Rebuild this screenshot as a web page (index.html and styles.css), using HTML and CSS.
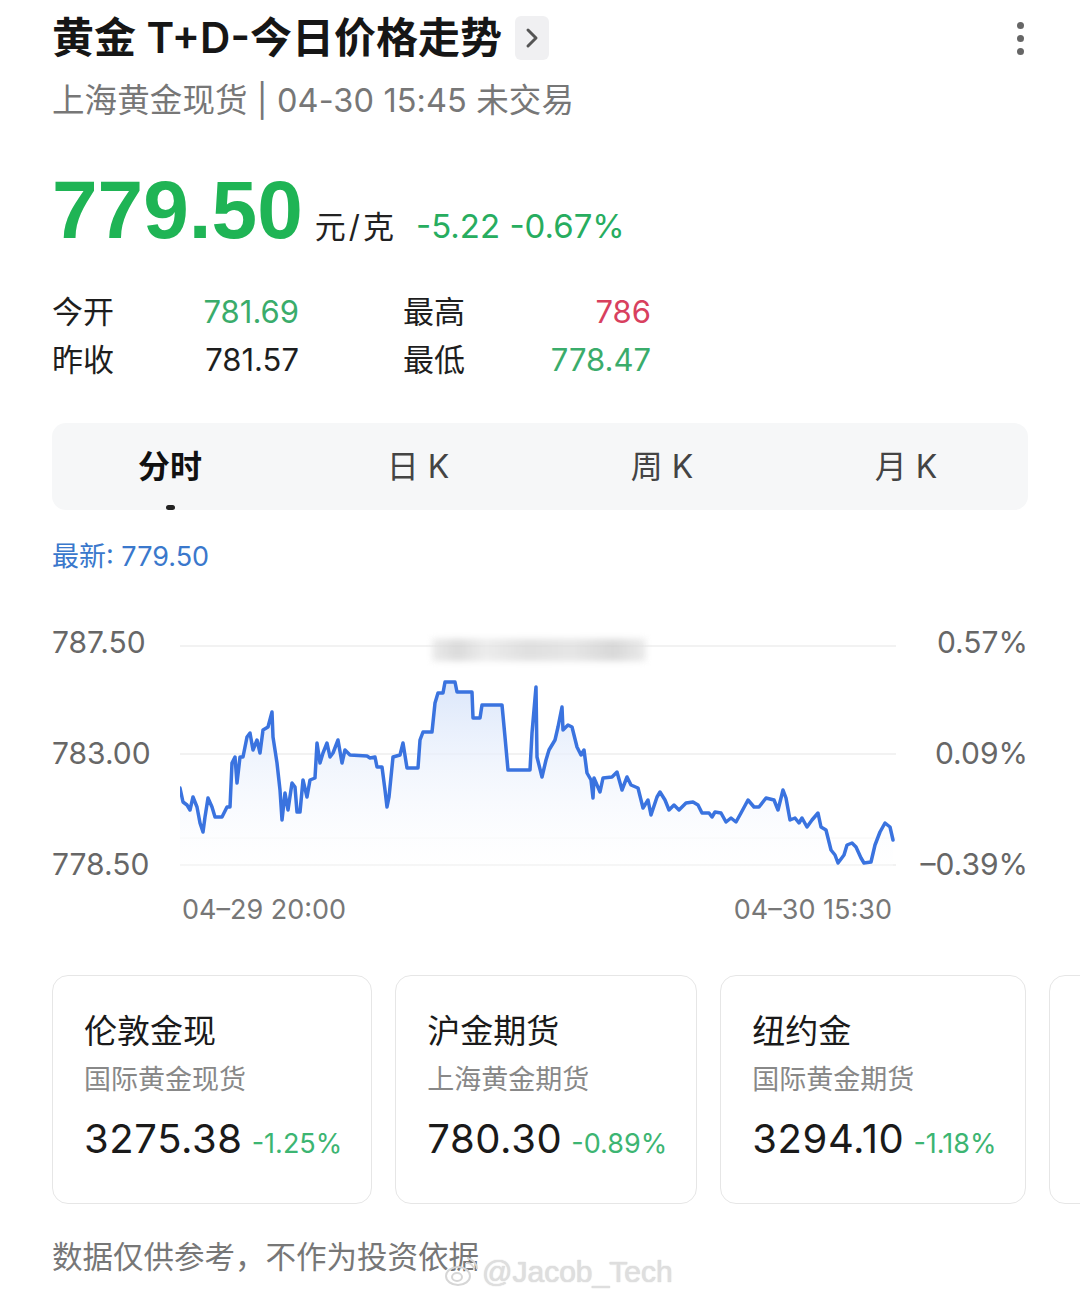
FILE: index.html
```html
<!DOCTYPE html>
<html lang="zh-CN">
<head>
<meta charset="utf-8">
<title>黄金 T+D-今日价格走势</title>
<link rel="stylesheet" href="styles.css">
</head>
<body>
<div class="page">
  <header class="header">
    <div class="title-row">
      <h1 class="title">黄金 T+D-今日价格走势</h1>
      <span class="chev-box">
        <svg width="16" height="22" viewBox="0 0 16 22"><polyline points="4,3 12,11 4,19" fill="none" stroke="#555" stroke-width="3" stroke-linecap="round" stroke-linejoin="round"/></svg>
      </span>
    </div>
    <div class="more"><i></i><i></i><i></i></div>
  </header>
  <div class="subtitle">上海黄金现货 | 04-30 15:45 未交易</div>

  <div class="price-row">
    <span class="price">779.50</span>
    <span class="unit">元/克</span>
    <span class="change">-5.22 -0.67%</span>
  </div>

  <div class="stats">
    <span class="lbl">今开</span><span class="val green">781.69</span>
    <span class="lbl">最高</span><span class="val red">786</span>
    <span class="lbl">昨收</span><span class="val">781.57</span>
    <span class="lbl">最低</span><span class="val green">778.47</span>
  </div>

  <div class="tabs">
    <div class="tab active">分时<span class="ind"></span></div>
    <div class="tab">日 K</div>
    <div class="tab">周 K</div>
    <div class="tab">月 K</div>
  </div>

  <div class="latest">最新: 779.50</div>

  <div class="chart">
    <div class="axis axis-left"><span>787.50</span><span>783.00</span><span>778.50</span></div>
    <svg class="plot" width="716" height="252" viewBox="180 627 716 252">
      <defs>
        <linearGradient id="fillg" x1="0" y1="680" x2="0" y2="870" gradientUnits="userSpaceOnUse">
          <stop offset="0" stop-color="#d9e5fa" stop-opacity="0.95"/>
          <stop offset="1" stop-color="#ffffff" stop-opacity="0.3"/>
        </linearGradient>
      </defs>
      <line x1="180" y1="646" x2="896" y2="646" stroke="#eeeeee" stroke-width="1.5"/>
      <line x1="180" y1="754" x2="896" y2="754" stroke="#eeeeee" stroke-width="1.5"/>
      <line x1="180" y1="838" x2="896" y2="838" stroke="#f6f6f6" stroke-width="1"/>
      <line x1="180" y1="865" x2="896" y2="865" stroke="#eeeeee" stroke-width="1.5"/>
      <path fill="url(#fillg)" stroke="none" d="M180,788 L183,802 L187,805 L190,810 L193,797 L197,807 L200,823 L203,832 L205,817 L208,798 L212,807 L215,817 L222,817 L227,807 L230,807 L232,763 L235,757 L237,783 L240,757 L243,757 L247,737 L250,733 L253,750 L257,740 L260,753 L263,730 L268,727 L272,712 L273,737 L277,763 L280,790 L282,820 L285,793 L288,810 L292,783 L295,787 L297,812 L300,812 L303,780 L307,797 L310,780 L315,778 L317,743 L320,763 L323,753 L327,743 L330,757 L333,753 L338,740 L342,763 L345,750 L350,755 L367,756 L370,758 L375,757 L377,767 L382,767 L385,790 L387,807 L389,797 L393,757 L400,755 L403,743 L407,768 L418,768 L420,740 L423,732 L432,732 L435,703 L438,693 L443,693 L445,682 L455,682 L457,692 L472,692 L473,718 L480,718 L482,705 L502,705 L505,737 L508,770 L530,770 L532,733 L536,687 L537,757 L542,777 L546,760 L549,750 L555,740 L558,727 L562,707 L563,730 L568,725 L572,727 L577,747 L581,755 L584,750 L587,773 L591,780 L593,798 L594,778 L600,792 L603,778 L612,777 L617,772 L622,790 L627,777 L631,785 L638,788 L643,808 L648,800 L651,815 L657,797 L660,792 L665,800 L669,810 L674,805 L679,810 L686,803 L693,802 L698,805 L702,813 L709,813 L712,817 L715,812 L721,813 L726,822 L731,818 L736,822 L741,813 L748,800 L754,807 L759,807 L766,798 L774,800 L778,810 L783,790 L786,798 L790,820 L795,818 L799,823 L802,818 L807,827 L812,820 L818,813 L821,827 L826,830 L831,850 L835,855 L838,863 L844,855 L847,845 L852,843 L856,847 L861,858 L864,863 L871,862 L875,845 L880,832 L885,823 L890,827 L893,840 L893,868 L180,868 Z"/>
      <path fill="none" stroke="#3a73df" stroke-width="3.5" stroke-linejoin="round" stroke-linecap="round" d="M180,788 L183,802 L187,805 L190,810 L193,797 L197,807 L200,823 L203,832 L205,817 L208,798 L212,807 L215,817 L222,817 L227,807 L230,807 L232,763 L235,757 L237,783 L240,757 L243,757 L247,737 L250,733 L253,750 L257,740 L260,753 L263,730 L268,727 L272,712 L273,737 L277,763 L280,790 L282,820 L285,793 L288,810 L292,783 L295,787 L297,812 L300,812 L303,780 L307,797 L310,780 L315,778 L317,743 L320,763 L323,753 L327,743 L330,757 L333,753 L338,740 L342,763 L345,750 L350,755 L367,756 L370,758 L375,757 L377,767 L382,767 L385,790 L387,807 L389,797 L393,757 L400,755 L403,743 L407,768 L418,768 L420,740 L423,732 L432,732 L435,703 L438,693 L443,693 L445,682 L455,682 L457,692 L472,692 L473,718 L480,718 L482,705 L502,705 L505,737 L508,770 L530,770 L532,733 L536,687 L537,757 L542,777 L546,760 L549,750 L555,740 L558,727 L562,707 L563,730 L568,725 L572,727 L577,747 L581,755 L584,750 L587,773 L591,780 L593,798 L594,778 L600,792 L603,778 L612,777 L617,772 L622,790 L627,777 L631,785 L638,788 L643,808 L648,800 L651,815 L657,797 L660,792 L665,800 L669,810 L674,805 L679,810 L686,803 L693,802 L698,805 L702,813 L709,813 L712,817 L715,812 L721,813 L726,822 L731,818 L736,822 L741,813 L748,800 L754,807 L759,807 L766,798 L774,800 L778,810 L783,790 L786,798 L790,820 L795,818 L799,823 L802,818 L807,827 L812,820 L818,813 L821,827 L826,830 L831,850 L835,855 L838,863 L844,855 L847,845 L852,843 L856,847 L861,858 L864,863 L871,862 L875,845 L880,832 L885,823 L890,827 L893,840"/>
    </svg>
    <div class="axis axis-right"><span>0.57%</span><span>0.09%</span><span>–0.39%</span></div>
    <div class="smudge"></div>
  </div>
  <div class="xlabels"><span>04–29 20:00</span><span>04–30 15:30</span></div>

  <div class="cards">
    <div class="card">
      <div class="card-title">伦敦金现</div>
      <div class="card-sub">国际黄金现货</div>
      <div class="card-val"><span class="num">3275.38</span><span class="pct">-1.25%</span></div>
    </div>
    <div class="card">
      <div class="card-title">沪金期货</div>
      <div class="card-sub">上海黄金期货</div>
      <div class="card-val"><span class="num">780.30</span><span class="pct">-0.89%</span></div>
    </div>
    <div class="card">
      <div class="card-title">纽约金</div>
      <div class="card-sub">国际黄金期货</div>
      <div class="card-val"><span class="num">3294.10</span><span class="pct">-1.18%</span></div>
    </div>
    <div class="card card-empty"></div>
  </div>

  <div class="footer">
    <span>数据仅供参考，不作为投资依据</span>
    <div class="wm">
      <svg width="34" height="30" viewBox="0 0 34 30"><g fill="none" stroke="#d6d6d6" stroke-width="2"><ellipse cx="14" cy="19" rx="12" ry="9"/><ellipse cx="13" cy="20" rx="5" ry="4"/><path d="M22 6 a7 7 0 0 1 8 7"/><path d="M23 1 a12 12 0 0 1 10 11"/></g></svg>
      <span>@Jacob_Tech</span>
    </div>
  </div>
</div>
</body>
</html>
```

FILE: styles.css
```css
* { box-sizing: border-box; }
html, body { margin: 0; padding: 0; background: #ffffff; }
body {
  width: 1080px;
  height: 1296px;
  overflow: hidden;
  font-family: "Inter", "Noto Sans CJK SC", sans-serif;
  color: #1a1a1a;
}
.page { padding: 12px 52px 0 52px; }

.header { display: flex; justify-content: space-between; align-items: center; }
.title-row { display: flex; align-items: center; gap: 13px; }
.title {
  margin: 0;
  font-size: 42px;
  line-height: 52px;
  font-weight: 600;
  color: #161616;
}
.chev-box {
  width: 34px; height: 44px;
  border-radius: 6px;
  background: #f0f0f2;
  display: flex; align-items: center; justify-content: center;
}
.more { display: flex; flex-direction: column; gap: 6px; margin-right: 4px; }
.more i { display: block; width: 7px; height: 7px; border-radius: 50%; background: #666; }

.subtitle {
  margin-top: 17px;
  font-size: 32.5px;
  line-height: 40px;
  letter-spacing: 0.1px;
  color: #777;
}

.price-row {
  margin-top: 49px;
  display: flex;
  align-items: baseline;
}
.price {
  font-family: "Liberation Sans", "Noto Sans CJK SC", sans-serif;
  font-weight: 700;
  font-size: 82px;
  line-height: 80px;
  color: #1fb455;
}
.unit { margin-left: 12px; font-size: 31px; letter-spacing: 3px; color: #222; }
.change { margin-left: 19px; font-size: 33px; color: #27ad5f; }

.stats {
  margin-top: 38px;
  display: grid;
  grid-template-columns: 100px 147px 204px 148px;
  font-size: 31px;
  line-height: 48px;
}
.stats .lbl:nth-child(3), .stats .lbl:nth-child(7) { margin-left: 104px; }
.stats .val { text-align: right; color: #1e1e1e; }
.stats .green { color: #3aac6b; }
.stats .red { color: #d8405e; }
.stats .lbl { color: #1e1e1e; }

.tabs {
  margin-top: 39px;
  height: 87px;
  border-radius: 14px;
  background: #f6f7f8;
  display: grid;
  grid-template-columns: repeat(4, 1fr);
  align-items: center;
}
.tab {
  position: relative;
  text-align: center;
  font-size: 32px;
  line-height: 44px;
  color: #444;
}
.tab.active { color: #111; font-weight: 700; padding-right: 8px; }
.ind {
  position: absolute;
  left: 114px; top: 60px;
  width: 9px; height: 5px;
  border-radius: 3px;
  background: #222;
}

.latest {
  margin-top: 29px;
  font-size: 27px;
  line-height: 36px;
  color: #3a78cc;
}

.chart {
  position: relative;
  margin-top: 52px;
  display: flex;
  height: 252px;
}
.axis {
  display: flex;
  flex-direction: column;
  justify-content: space-between;
  height: 252px;
  font-size: 30px;
  line-height: 30px;
  color: #676767;
}
.axis-left { width: 128px; }
.axis-right { flex: 1; text-align: right; }
.plot { display: block; flex: none; }
.smudge {
  position: absolute;
  left: 380px; top: 12px;
  width: 214px; height: 22px;
  background: linear-gradient(90deg, #e6e6e6 0%, #d2d2d2 12%, #e8e8e8 25%, #d8d8d8 45%, #e0e0e0 65%, #cfcfcf 85%, #e6e6e6 100%);
  filter: blur(3px);
  opacity: 0.8;
}

.xlabels {
  margin-top: 14px;
  margin-left: 130px;
  width: 710px;
  display: flex;
  justify-content: space-between;
  font-size: 27px;
  line-height: 34px;
  color: #777;
}

.cards {
  margin-top: 48px;
  margin-right: -52px;
  display: flex;
  gap: 23px;
  overflow: hidden;
}
.card {
  flex: none;
  border: 1px solid #e6e6e6;
  border-radius: 16px;
  padding: 33px 29px 34px 31px;
  background: #fff;
}
.card-empty { width: 300px; }
.card-title { font-size: 33px; line-height: 44px; color: #1a1a1a; }
.card-sub { margin-top: 9px; font-size: 27px; line-height: 36px; color: #888; }
.card-val { margin-top: 16px; display: flex; align-items: baseline; gap: 9px; line-height: 50px; white-space: nowrap; }
.card-val .num { font-size: 40px; letter-spacing: 0.6px; color: #1a1a1a; }
.card-val .pct { font-size: 27px; color: #3cb572; }

.footer {
  position: relative;
  margin-top: 33px;
  font-size: 30.5px;
  line-height: 40px;
  color: #777;
}
.wm {
  position: absolute;
  left: 392px; top: 18px;
  display: flex; align-items: center; gap: 4px;
  font-family: "Liberation Sans", sans-serif;
  font-size: 30px;
  line-height: 34px;
  color: #dedede;
  text-shadow: 0 0 2px #fff, 0 0 1px #999;
}
```
